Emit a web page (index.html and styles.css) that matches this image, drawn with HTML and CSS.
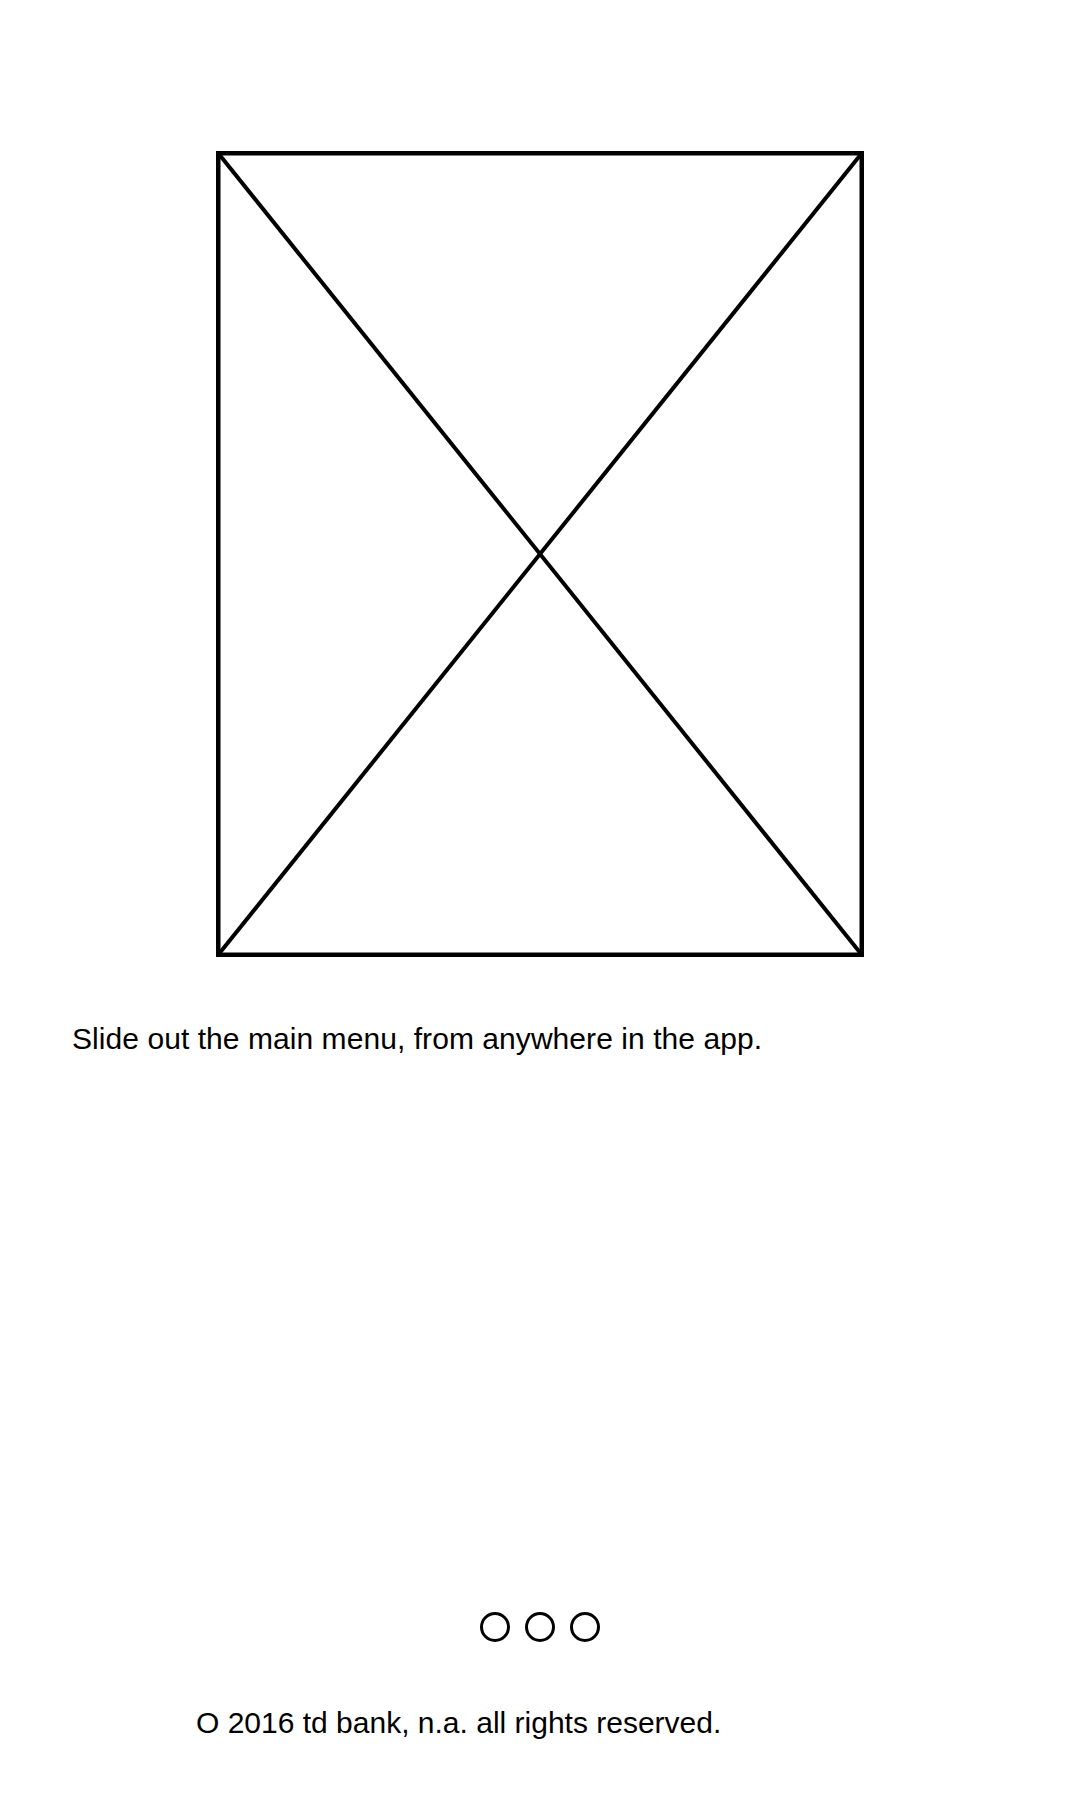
FILE: index.html
```html
<!DOCTYPE html>
<html lang="en">
<head>
<meta charset="utf-8">
<title>Slide out menu</title>
<link rel="stylesheet" href="styles.css">
</head>
<body>
<main class="screen">
  <div class="hero">
    <svg class="placeholder" width="648" height="806" viewBox="0 0 648 806" xmlns="http://www.w3.org/2000/svg">
      <rect x="2.25" y="2.25" width="643.5" height="801.5" fill="none" stroke="#000" stroke-width="4.5"/>
      <line x1="2.25" y1="2.25" x2="645.75" y2="803.75" stroke="#000" stroke-width="4"/>
      <line x1="645.75" y1="2.25" x2="2.25" y2="803.75" stroke="#000" stroke-width="4"/>
    </svg>
  </div>
  <p class="caption">Slide out the main menu, from anywhere in the app.</p>
  <div class="dots">
    <span class="dot"></span>
    <span class="dot"></span>
    <span class="dot"></span>
  </div>
  <p class="footer">O 2016 td bank, n.a. all rights reserved.</p>
</main>
</body>
</html>
```

FILE: styles.css
```css
html, body {
  margin: 0;
  padding: 0;
  background: #fff;
}
body {
  width: 1080px;
  height: 1800px;
  overflow: hidden;
  font-family: "Liberation Sans", Arial, sans-serif;
  color: #000;
}
.screen {
  display: flex;
  flex-direction: column;
}
.hero {
  padding-top: 151px;
  display: flex;
  justify-content: center;
}
.placeholder {
  display: block;
}
.caption {
  margin: 67px 0 0;
  padding-left: 72px;
  font-size: 30px;
  line-height: 30px;
  letter-spacing: 0.06px;
}
.dots {
  margin-top: 558px;
  display: flex;
  justify-content: center;
  gap: 15px;
}
.dot {
  width: 30px;
  height: 30px;
  box-sizing: border-box;
  border: 3px solid #000;
  border-radius: 50%;
}
.footer {
  margin: 66px 0 0;
  padding-left: 196px;
  font-size: 30px;
  line-height: 30px;
}
```
